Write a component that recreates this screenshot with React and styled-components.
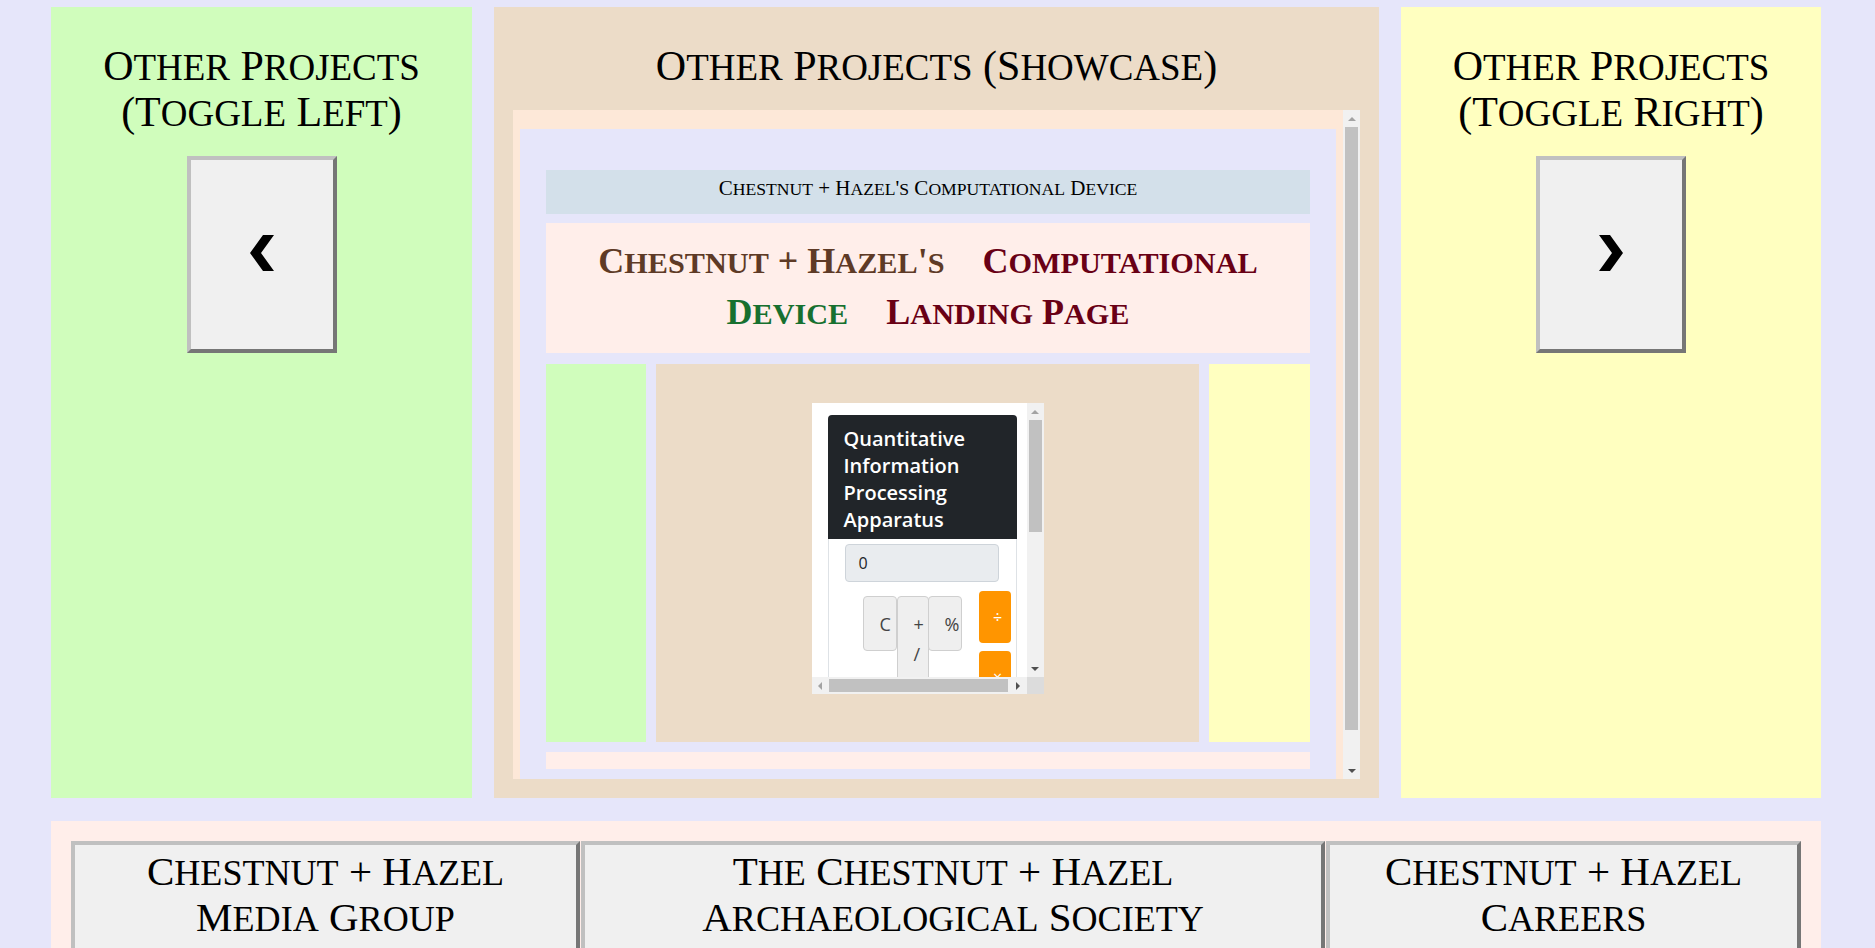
import React from 'react';
import styled, { createGlobalStyle } from 'styled-components';

const GlobalStyle = createGlobalStyle`
  html, body {
    margin: 0;
    padding: 0;
    background: #e6e6fa;
    overflow: hidden;
  }
  body {
    font-family: 'Liberation Serif', 'Times New Roman', serif;
    color: #000;
  }
`;

// lowercase letters turn into small capitals, like the Cinzel face
const Sc = styled.span`
  font-size: ${(p) => p.$ratio || 0.88}em;
  line-height: 1;
  text-transform: uppercase;
`;

const Caps = ({ text, ratio }) => {
  const parts = text.match(/[a-z]+|[^a-z]+/g) || [];
  return (
    <>
      {parts.map((part, i) =>
        /[a-z]/.test(part[0]) ? (
          <Sc key={i} $ratio={ratio}>
            {part}
          </Sc>
        ) : (
          <React.Fragment key={i}>{part}</React.Fragment>
        )
      )}
    </>
  );
};

const Page = styled.div`
  padding: 7px 54px 0 51px;
`;

const Top = styled.div`
  display: grid;
  grid-template-columns: 421px 885px 1fr;
  column-gap: 22px;
`;

const Panel = styled.section`
  background: ${(p) => p.$bg};
  padding: 0 19px 19px;
  box-sizing: border-box;
`;

const PanelTitle = styled.h2`
  margin: 36px 0 21px;
  font-size: 42px;
  line-height: 46px;
  font-weight: normal;
  text-align: center;
`;

const ToggleButton = styled.button`
  display: flex;
  align-items: center;
  justify-content: center;
  margin: 0 auto;
  width: 150px;
  height: 197px;
  box-sizing: border-box;
  background: #f0f0f0;
  border-style: solid;
  border-width: 4px;
  border-color: #c0c0c0 #767676 #767676 #c0c0c0;
  padding: 0 0 4px;
  cursor: pointer;
`;

const Chevron = ({ dir }) => (
  <svg width="24" height="36" viewBox="0 0 24 36">
    <polygon
      points={dir === 'left' ? '13,0 24,0 11,18 24,36 13,36 0,18' : '0,0 11,0 24,18 11,36 0,36 13,18'}
      fill="#000"
    />
  </svg>
);

/* fake classic scrollbars */
const VBar = styled.div`
  width: 17px;
  flex-shrink: 0;
  display: flex;
  flex-direction: column;
  background: #f1f1f1;
`;

const HBar = styled.div`
  height: 17px;
  flex: 1;
  display: flex;
  background: #f1f1f1;
`;

const Arrow = styled.div`
  width: 17px;
  height: 17px;
  flex-shrink: 0;
  display: flex;
  align-items: center;
  justify-content: center;
`;

const Track = styled.div`
  flex: 1;
  display: flex;
  flex-direction: ${(p) => (p.$horizontal ? 'row' : 'column')};
`;

const Thumb = styled.div`
  background: #c1c1c1;
  flex-shrink: 0;
  ${(p) =>
    p.$horizontal
      ? `width: ${p.$size}px; margin: 2px 0 2px ${p.$offset}px;`
      : `height: ${p.$size}px; margin: ${p.$offset}px 2px 0;`}
`;

const Tri = ({ dir, active }) => {
  const pts = {
    up: '0,4 4,0 8,4',
    down: '0,0 8,0 4,4',
    left: '4,0 4,8 0,4',
    right: '0,0 4,4 0,8',
  }[dir];
  const vertical = dir === 'up' || dir === 'down';
  return (
    <svg width={vertical ? 8 : 4} height={vertical ? 4 : 8}>
      <polygon points={pts} fill={active ? '#505050' : '#a3a3a3'} />
    </svg>
  );
};

const VScroll = ({ offset, size }) => (
  <VBar>
    <Arrow>
      <Tri dir="up" />
    </Arrow>
    <Track>
      <Thumb $offset={offset} $size={size} />
    </Track>
    <Arrow>
      <Tri dir="down" active />
    </Arrow>
  </VBar>
);

/* the showcase frame */
const Frame = styled.div`
  display: flex;
  height: 669px;
  background: #fde8d8;
`;

const FrameView = styled.div`
  flex: 1;
  overflow: hidden;
  padding: 19px 7px 0;
`;

const FrameBody = styled.div`
  background: #e6e6fa;
  padding: 41px 26px 40px;
`;

const DeviceBar = styled.div`
  height: 44px;
  background: #d3e0ea;
  font-size: 21px;
  line-height: 36px;
  text-align: center;
`;

const Headline = styled.h1`
  margin: 9px 0 0;
  padding: 13px 10px 15px;
  background: #ffeeea;
  font-size: 36px;
  line-height: 51px;
  font-weight: bold;
  text-align: center;
`;

const Word = styled.span`
  display: inline-block;
  margin: 0 19px;
  color: ${(p) => p.$color};
`;

const Stage = styled.div`
  margin-top: 11px;
  height: 378px;
  display: grid;
  grid-template-columns: 100px 1fr 101px;
  column-gap: 10px;
`;

const Block = styled.div`
  background: ${(p) => p.$bg};
`;

const CalcStage = styled.div`
  background: #ecdcc8;
  display: flex;
  justify-content: center;
  align-items: flex-start;
  padding-top: 39px;
`;

const Strip = styled.div`
  margin-top: 10px;
  height: 17px;
  background: #ffeeea;
`;

/* the nested calculator frame */
const CalcFrame = styled.div`
  width: 232px;
  height: 291px;
  display: flex;
  flex-direction: column;
  background: #fff;
`;

const CalcMain = styled.div`
  display: flex;
  height: 274px;
`;

const CalcView = styled.div`
  flex: 1;
  overflow: hidden;
  padding: 12px 0 0 16px;
  font-family: 'Open Sans', 'Noto Sans', sans-serif;
`;

const Card = styled.div`
  width: 189px;
`;

const CardHead = styled.div`
  background: #212529;
  color: #fff;
  border-radius: 4px 4px 0 0;
  padding: 10px 16px 6px;
  font-size: 20px;
  font-weight: 600;
  line-height: 27px;
`;

const CardBody = styled.div`
  border: 1px solid #dee2e6;
  border-top: none;
  padding: 5px 17px 40px 16px;
`;

const Display = styled.div`
  height: 38px;
  box-sizing: border-box;
  width: 154px;
  background: #e9ecef;
  border: 1px solid #ced4da;
  border-radius: 4px;
  padding-left: 13px;
  font-size: 16px;
  line-height: 36px;
  color: #212529;
`;

const Keypad = styled.div`
  display: flex;
  align-items: flex-start;
  margin-top: 9px;
  padding-left: 18px;
`;

const KeyGroup = styled.div`
  display: flex;
  align-items: flex-start;
  margin-top: 5px;
`;

const Key = styled.div`
  width: ${(p) => p.$w}px;
  min-height: 55px;
  box-sizing: border-box;
  margin-left: ${(p) => p.$ml || 0}px;
  background: #efefef;
  border: 1px solid #cfcfcf;
  border-radius: 4px;
  padding: 12px 0 0 16px;
  font-size: 18px;
  line-height: 30px;
  color: #444;
  word-spacing: 20px;
`;

const OpColumn = styled.div`
  margin-left: 17px;
  display: flex;
  flex-direction: column;
  gap: 8px;
`;

const OpKey = styled.div`
  width: 32px;
  height: 52px;
  background: #ff9500;
  border-radius: 4px;
  color: #fff;
  font-size: 16px;
  display: flex;
  align-items: center;
  justify-content: center;
  padding-left: 6px;
  box-sizing: border-box;
`;

const Corner = styled.div`
  width: 17px;
  height: 17px;
  background: #dcdcdc;
`;

const CalcFoot = styled.div`
  display: flex;
`;

const Calculator = () => (
  <CalcFrame>
    <CalcMain>
      <CalcView>
        <Card>
          <CardHead>Quantitative Information Processing Apparatus</CardHead>
          <CardBody>
            <Display>0</Display>
            <Keypad>
              <KeyGroup>
                <Key $w={34}>C</Key>
                <Key $w={32}>+ / −</Key>
                <Key $w={34} $ml={-1}>%</Key>
              </KeyGroup>
              <OpColumn>
                <OpKey>÷</OpKey>
                <OpKey>×</OpKey>
              </OpColumn>
            </Keypad>
          </CardBody>
        </Card>
      </CalcView>
      <VScroll offset={0} size={112} />
    </CalcMain>
    <CalcFoot>
      <HBar>
        <Arrow>
          <Tri dir="left" />
        </Arrow>
        <Track $horizontal>
          <Thumb $horizontal $offset={0} $size={179} />
        </Track>
        <Arrow>
          <Tri dir="right" active />
        </Arrow>
      </HBar>
      <Corner />
    </CalcFoot>
  </CalcFrame>
);

/* bottom links */
const Bottom = styled.div`
  margin-top: 23px;
  background: #ffeeea;
  padding: 20px 20px 0;
  display: grid;
  grid-template-columns: 509px 744px 1fr;
  column-gap: 1px;
`;

const LinkButton = styled.button`
  height: 180px;
  box-sizing: border-box;
  background: #f0f0f0;
  border-style: solid;
  border-width: 4px;
  border-color: #c0c0c0 #767676 #767676 #c0c0c0;
  padding: 3px 10px 0;
  font-family: 'Liberation Serif', 'Times New Roman', serif;
  font-size: 41px;
  line-height: 46px;
  color: #000;
  text-align: center;
  display: flex;
  justify-content: center;
  align-items: flex-start;
`;

const links = [
  ['Chestnut + Hazel', 'Media Group'],
  ['The Chestnut + Hazel', 'Archaeological Society'],
  ['Chestnut + Hazel', 'Careers'],
];

export default function App() {
  return (
    <>
      <GlobalStyle />
      <Page>
        <Top>
          <Panel $bg="#d0fdbc">
            <PanelTitle>
              <Caps text="Other Projects (Toggle Left)" />
            </PanelTitle>
            <ToggleButton aria-label="previous">
              <Chevron dir="left" />
            </ToggleButton>
          </Panel>

          <Panel $bg="#ecdcc8">
            <PanelTitle>
              <Caps text="Other Projects (Showcase)" />
            </PanelTitle>
            <Frame>
              <FrameView>
                <FrameBody>
                  <DeviceBar>
                    <Caps text="Chestnut + Hazel's Computational Device" ratio={0.84} />
                  </DeviceBar>
                  <Headline>
                    <Word $color="#5e3a26">
                      <Caps text="Chestnut + Hazel's" ratio={0.84} />
                    </Word>
                    <Word $color="#690015">
                      <Caps text="Computational" ratio={0.84} />
                    </Word>
                    <Word $color="#17702f">
                      <Caps text="Device" ratio={0.84} />
                    </Word>
                    <Word $color="#690015">
                      <Caps text="Landing Page" ratio={0.84} />
                    </Word>
                  </Headline>
                  <Stage>
                    <Block $bg="#d0fdbc" />
                    <CalcStage>
                      <Calculator />
                    </CalcStage>
                    <Block $bg="#ffffc0" />
                  </Stage>
                  <Strip />
                </FrameBody>
              </FrameView>
              <VScroll offset={0} size={603} />
            </Frame>
          </Panel>

          <Panel $bg="#ffffc0">
            <PanelTitle>
              <Caps text="Other Projects (Toggle Right)" />
            </PanelTitle>
            <ToggleButton aria-label="next">
              <Chevron dir="right" />
            </ToggleButton>
          </Panel>
        </Top>

        <Bottom>
          {links.map(([a, b]) => (
            <LinkButton key={b}>
              <span>
                <Caps text={a} />
                <br />
                <Caps text={b} />
              </span>
            </LinkButton>
          ))}
        </Bottom>
      </Page>
    </>
  );
}
